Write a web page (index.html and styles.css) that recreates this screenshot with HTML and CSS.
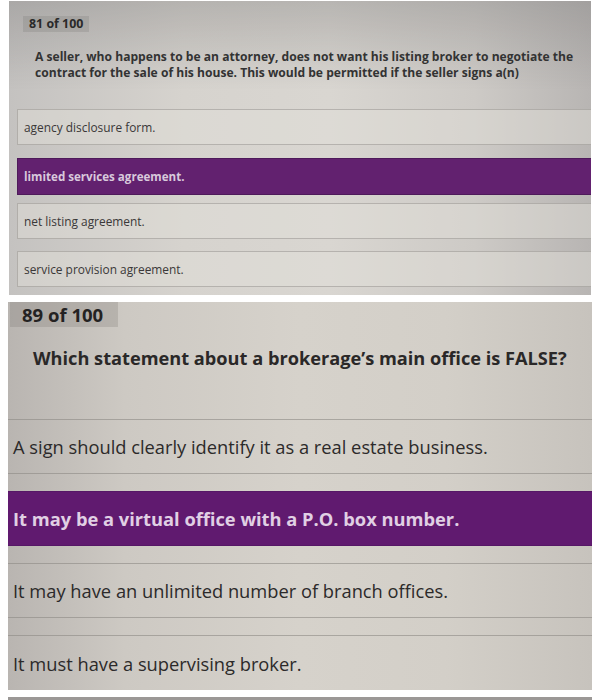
FILE: index.html
```html
<!DOCTYPE html>
<html>
<head>
<meta charset="utf-8">
<link rel="stylesheet" href="styles.css">
</head>
<body>
<div class="page">
  <section class="panel panel-small">
    <div class="tag">81 of 100</div>
    <p class="question">A seller, who happens to be an attorney, does not want his listing broker to negotiate the contract for the sale of his house. This would be permitted if the seller signs a(n)</p>
    <div class="options">
      <div class="opt">agency disclosure form.</div>
      <div class="opt selected">limited services agreement.</div>
      <div class="opt">net listing agreement.</div>
      <div class="opt">service provision agreement.</div>
    </div>
  </section>
  <section class="panel panel-large">
    <div class="tag">89 of 100</div>
    <p class="question">Which statement about a brokerage’s main office is FALSE?</p>
    <div class="options">
      <div class="opt">A sign should clearly identify it as a real estate business.</div>
      <div class="opt selected">It may be a virtual office with a P.O. box number.</div>
      <div class="opt">It may have an unlimited number of branch offices.</div>
      <div class="opt">It must have a supervising broker.</div>
    </div>
  </section>
  <div class="bottom-line"></div>
</div>
</body>
</html>
```

FILE: styles.css
```css
* { box-sizing: border-box; }
html, body { margin: 0; padding: 0; background: #ffffff; }
body { font-family: "Open Sans", Lato, Arial, sans-serif; color: #2b2a2a; }

.page {
  width: 603px;
  height: 700px;
  display: flex;
  flex-direction: column;
  padding-top: 1px;
}

.panel { display: flex; flex-direction: column; }

/* ---- first screenshot ---- */
.panel-small {
  margin-left: 9px;
  width: 582px;
  height: 295px;
  padding-top: 15px;
  background:
    linear-gradient(to bottom, rgba(120,118,118,0.35), rgba(120,118,118,0) 30%),
    linear-gradient(to right, #c4c2c0 0%, #d6d3ce 30%, #d9d6d1 55%, #cdcac6 80%, #b8b5b3 100%);
}
.panel-small .tag {
  align-self: flex-start;
  margin-left: 14px;
  padding: 0 6px;
  height: 16px;
  font-size: 12.4px;
  font-weight: 700;
  line-height: 16px;
  color: #2a2a2a;
  background: rgba(120,118,116,0.25);
}
.panel-small .question {
  margin: 17px 0 0 26px;
  width: 545px;
  font-size: 12.1px;
  line-height: 15.5px;
  font-weight: 700;
  color: #333;
}
.panel-small .options {
  display: flex;
  flex-direction: column;
  margin-top: 29px;
  margin-left: 8px;
}
.panel-small .opt {
  height: 36px;
  display: flex;
  align-items: center;
  padding-left: 6px;
  font-size: 11.9px;
  color: #3a3838;
  border: 1px solid rgba(150,146,142,0.55);
  border-right: none;
  background: rgba(226,223,218,0.45);
}
.panel-small .opt + .opt { margin-top: 12px; }
.panel-small .opt.selected {
  height: 37px;
  margin-top: 13px;
  background: #62216f;
  border-color: #4e1a5a;
  color: #d8c9dc;
  font-size: 11.6px;
  font-weight: 700;
  margin-bottom: -4px;
}

/* ---- second screenshot ---- */
.panel-large {
  margin-top: 7px;
  margin-left: 8px;
  width: 584px;
  height: 389px;
  background: linear-gradient(to right, #b9b5b1 0%, #cdc9c3 20%, #d6d2cb 50%, #d3cfc8 75%, #c7c3bd 100%);
}
.panel-large .tag {
  align-self: flex-start;
  width: 108px;
  height: 25px;
  margin-left: 2px;
  padding-left: 12px;
  font-size: 18.5px;
  font-weight: 700;
  line-height: 25px;
  color: #242222;
  background: rgba(110,106,102,0.22);
}
.panel-large .question {
  margin: 19px 0 0 25px;
  font-size: 18.2px;
  line-height: 24px;
  font-weight: 700;
  color: #2a2828;
}
.panel-large .options {
  display: flex;
  flex-direction: column;
  margin-top: 49px;
}
.panel-large .opt {
  height: 55px;
  display: flex;
  align-items: center;
  padding-left: 5px;
  font-size: 18.3px;
  color: #2c2a2a;
  border-top: 1px solid rgba(140,136,132,0.6);
  border-bottom: 1px solid rgba(140,136,132,0.6);
}
.panel-large .opt + .opt { margin-top: 17px; }
.panel-large .opt.selected {
  background: #601a6f;
  border-color: #561766;
  color: #e0d0e4;
  font-weight: 700;
}
.panel-large .opt:last-child { border-bottom: none; }

.bottom-line {
  margin-top: 7px;
  margin-left: 8px;
  width: 584px;
  height: 3px;
  background: #9b9896;
}
```
